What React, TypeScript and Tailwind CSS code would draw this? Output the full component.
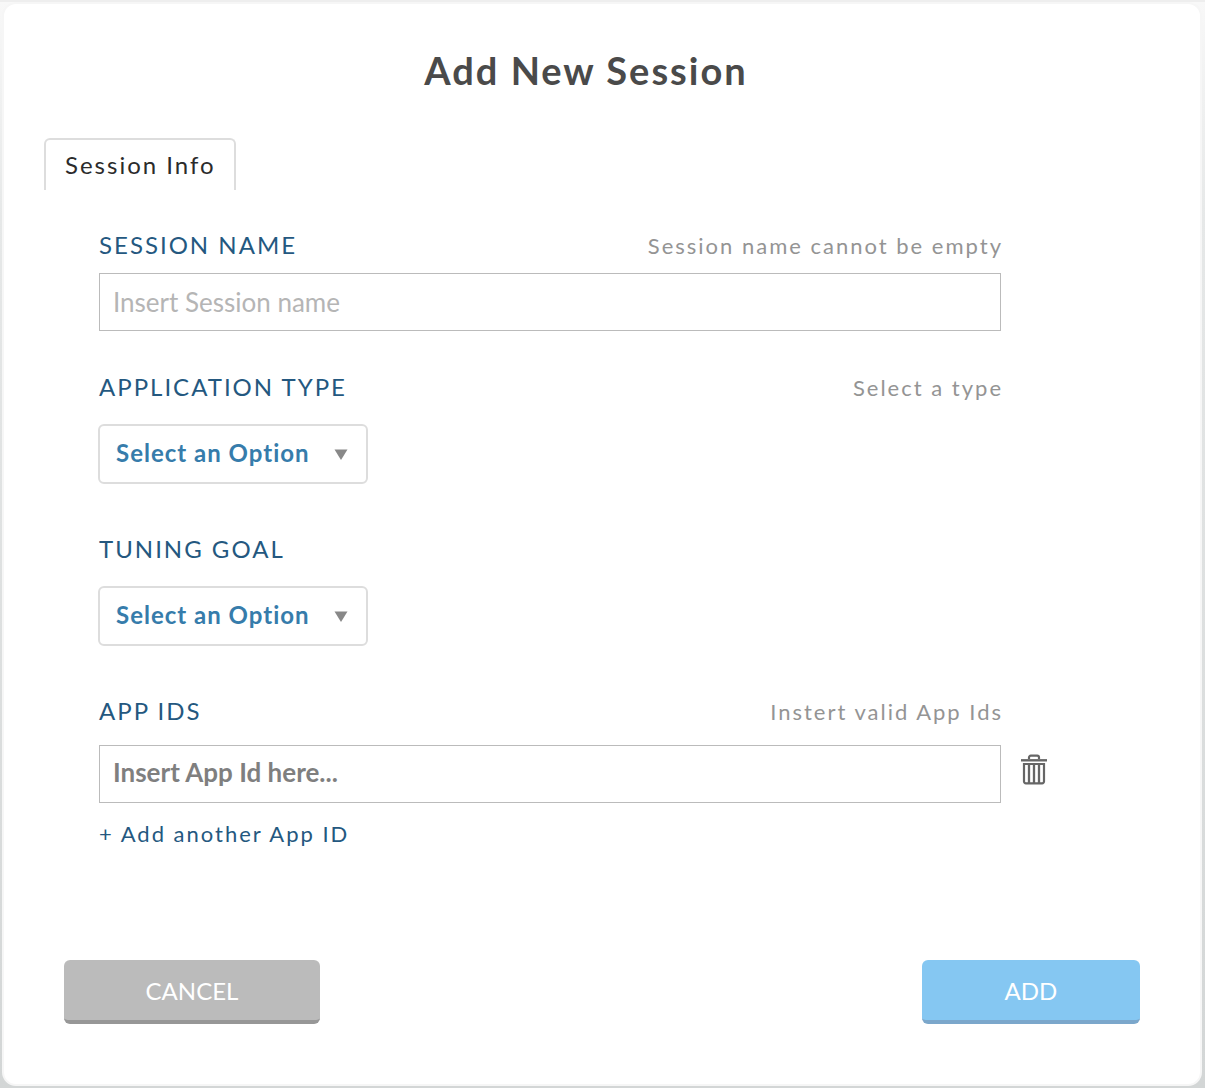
import { useId, useState } from "react";
import type { ReactNode } from "react";

function TrashIcon() {
  return (
    <svg viewBox="0 0 26 32" className="h-8 w-[26px]" fill="none" stroke="currentColor" aria-hidden="true">
      <path d="M8 6V4.5A1.8 1.8 0 0 1 9.8 2.7h6.4A1.8 1.8 0 0 1 18 4.5V6" strokeWidth="2.2" />
      <path d="M0 7.3h26" strokeWidth="2.4" />
      <path d="M3 11h20v17.5a1.8 1.8 0 0 1-1.8 1.8H4.8A1.8 1.8 0 0 1 3 28.500z" strokeWidth="2.2" />
      <path d="M8 11v19M13 11v19M18 11v19" strokeWidth="2.3" />
    </svg>
  );
}

function FieldHeader({ id, label, hint }: { id: string; label: string; hint?: string }) {
  return (
    <div className="flex items-center justify-between tracking-[2px]">
      <label htmlFor={id} className="pb-0.5 text-2xl leading-[30px] text-[#24587f]">
        {label}
      </label>
      {hint && <span className="-mr-0.5 text-[22px] leading-8 text-[#949494]">{hint}</span>}
    </div>
  );
}

function SelectField({ label, hint }: { label: string; hint?: string }) {
  const id = useId();
  return (
    <div>
      <FieldHeader id={id} label={label} hint={hint} />
      <div className="relative -ml-px mt-5 w-[270px]">
        <select
          id={id}
          className="h-[60px] w-full appearance-none rounded-md border-2 border-[#dddddd] bg-white pb-0.5 pl-4 pr-12 text-2xl font-bold tracking-[1px] text-[#367cab]"
        >
          <option>Select an Option</option>
        </select>
        <svg
          viewBox="0 0 14 11"
          className="pointer-events-none absolute right-5 top-[25px] h-[11px] w-3.5"
          fill="#888888"
          aria-hidden="true"
        >
          <path d="M0.500 0.500h13L7 11z" />
        </svg>
      </div>
    </div>
  );
}

function ActionButton({ className, children }: { className: string; children: ReactNode }) {
  return (
    <button type="button" className={"h-16 rounded-md border-b-4 pt-0.5 text-2xl text-white " + className}>
      {children}
    </button>
  );
}

export default function App() {
  const [appIds, setAppIds] = useState<string[]>([""]);
  const nameId = useId();
  const appId = useId();

  return (
    <main className="min-h-screen border-t-2 border-[#eeeeee] bg-linear-to-b from-[#f8f8f8] via-[#e6e8e8] via-20% to-[#d3d6d6] pb-0.5 pl-0.5 pr-[3px] font-[Lato,sans-serif]">
      <section className="rounded-[14px] border-2 border-[#f6f6f6] bg-white pb-[60px] pt-[42px]">
        <h1 className="pr-8 text-center text-[38px] font-bold leading-[48px] tracking-[2px] text-[#4a4a4a]">
          Add New Session
        </h1>

        <div role="tablist" className="mt-11 pl-10">
          <button
            type="button"
            role="tab"
            aria-selected="true"
            className="block h-[52px] rounded-t-md border-2 border-b-0 border-[#dddddd] pl-[19px] pr-[18px] text-2xl tracking-[2px] text-[#2b2b2b]"
          >
            Session Info
          </button>
        </div>

        <form className="mt-10 pl-[95px] pr-[199px]">
          <FieldHeader id={nameId} label="SESSION NAME" hint="Session name cannot be empty" />
          <input
            id={nameId}
            type="text"
            placeholder="Insert Session name"
            className="mt-[11px] block h-[58px] w-full border border-[#bbbbbb] px-[13px] text-[26px] placeholder:text-[#b5b5b5]"
          />
          <div className="mt-[41px] flex flex-col gap-[50px]">
            <SelectField label="APPLICATION TYPE" hint="Select a type" />
            <SelectField label="TUNING GOAL" />
            <div>
              <FieldHeader id={appId + "0"} label="APP IDS" hint="Instert valid App Ids" />
              <div className="mt-[17px] flex flex-col gap-3">
                {appIds.map((value, i) => (
                  <div key={i} className="-mr-[46px] flex items-center gap-5">
                    <input
                      id={appId + i}
                      type="text"
                      value={value}
                      onChange={(e) => setAppIds(appIds.map((v, j) => (j === i ? e.target.value : v)))}
                      placeholder="Insert App Id here..."
                      className="h-[58px] min-w-0 flex-1 border border-[#bbbbbb] px-[13px] pb-1 text-[26px] font-bold placeholder:text-[#7f7f7f]"
                    />
                    <button
                      type="button"
                      aria-label="Remove App ID"
                      onClick={() => setAppIds(appIds.filter((_, j) => j !== i))}
                      className="pb-2.5 text-[#666666]"
                    >
                      <TrashIcon />
                    </button>
                  </div>
                ))}
              </div>
              <button
                type="button"
                onClick={() => setAppIds([...appIds, ""])}
                className="mt-[15px] block text-[22px] leading-8 tracking-[2px] text-[#24587f]"
              >
                + Add another App ID
              </button>
            </div>
          </div>
        </form>

        <footer className="mt-[110px] flex justify-between px-[60px]">
          <ActionButton className="w-64 border-[#979797] bg-[#bbbbbb]">CANCEL</ActionButton>
          <ActionButton className="w-[218px] border-[#7ba7cb] bg-[#85c7f2]">ADD</ActionButton>
        </footer>
      </section>
    </main>
  );
}
